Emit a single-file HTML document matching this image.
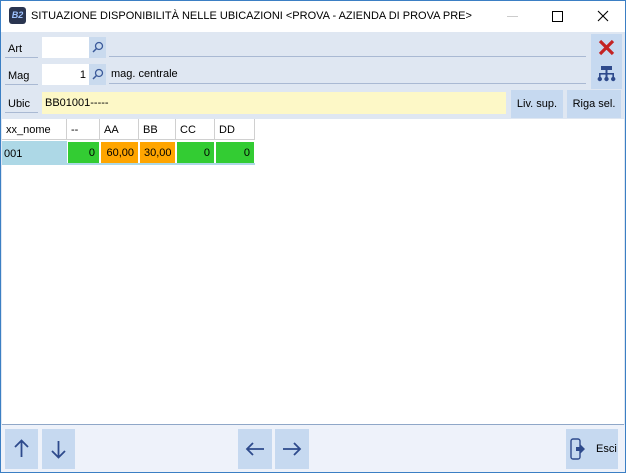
<!DOCTYPE html>
<html><head><style>
body{margin:0;width:626px;height:473px;overflow:hidden;font-family:"Liberation Sans",sans-serif;font-size:11px;color:#000;background:#fff}
.win{position:absolute;left:0;top:0;width:624px;height:471px;border:1px solid #3b7fc4;background:#dfe7f2}
.tb{position:absolute;left:0;top:0;width:624px;height:31px;background:#fff}
.a{position:absolute}
.lbl{position:absolute;left:4px;width:33px;height:21px;border-bottom:1px solid #a9b9d3;line-height:24px;padding-left:3px;box-sizing:border-box}
.inp{position:absolute;left:41px;width:47px;height:21px;background:#fff;text-align:right;line-height:22px;padding-right:3px;box-sizing:border-box}
.srch{position:absolute;left:88px;width:17px;height:21px;background:#c9daee}
.ln{position:absolute;left:108px;width:477px;height:21px;border-bottom:1px solid #a9b9d3;line-height:22px;padding-left:2px;box-sizing:border-box}
.btn{position:absolute;background:#c6d9f0;text-align:center}
.grid{position:absolute;left:1px;top:118px;width:622px;height:305px;background:#fff;border-bottom:1px solid #8fa7c8}
.c{position:absolute;height:21px;line-height:22px;box-sizing:border-box;padding:0 4px}
.h{top:0;border-right:1px solid #d0d0d0;border-bottom:1px solid #d0d0d0}
.d{top:23px;text-align:right;border-right:1px solid #fff}
</style></head><body>
<div class="win">
<div class="tb">
 <div class="a" style="left:8px;top:6px;width:17px;height:17px;background:#2a3550;border-radius:3px;color:#9fc3ff;font-size:9px;font-style:italic;line-height:17px;text-align:center;font-weight:bold">B2</div>
 <div class="a" style="left:30px;top:9px;font-size:11px">SITUAZIONE DISPONIBILITÀ NELLE UBICAZIONI &lt;PROVA - AZIENDA DI PROVA PRE&gt;</div>
 <div class="a" style="left:506px;top:15px;width:11px;height:1px;background:#ccc"></div>
 <div class="a" style="left:551px;top:10px;width:9px;height:9px;border:1px solid #000"></div>
 <svg class="a" style="left:596px;top:9px" width="12" height="12"><path d="M1 1L11 11M11 1L1 11" stroke="#000" stroke-width="1.1"/></svg>
</div>
<div class="lbl" style="top:36px">Art</div>
<div class="inp" style="top:36px"></div>
<div class="srch" style="top:36px"><svg width="17" height="21"><circle cx="10" cy="9" r="3.5" fill="none" stroke="#3b5a9a" stroke-width="1.3"/><path d="M7.5 11.5L4 15" stroke="#3b5a9a" stroke-width="1.5"/></svg></div>
<div class="ln" style="top:35px"></div>
<div class="lbl" style="top:63px">Mag</div>
<div class="inp" style="top:63px">1</div>
<div class="srch" style="top:63px"><svg width="17" height="21"><circle cx="10" cy="9" r="3.5" fill="none" stroke="#3b5a9a" stroke-width="1.3"/><path d="M7.5 11.5L4 15" stroke="#3b5a9a" stroke-width="1.5"/></svg></div>
<div class="ln" style="top:62px">mag. centrale</div>
<div class="lbl" style="top:91px">Ubic</div>
<div class="a" style="left:41px;top:91px;width:464px;height:22px;background:#fdf8c7;line-height:22px;padding-left:3px;box-sizing:border-box">BB01001-----</div>
<div class="btn" style="left:510px;top:89px;width:52px;height:28px;line-height:28px">Liv. sup.</div>
<div class="btn" style="left:566px;top:89px;width:54px;height:28px;line-height:28px">Riga sel.</div>
<div class="btn" style="left:590px;top:33px;width:31px;height:55px">
 <svg width="31" height="55"><path d="M9 7L22 20M22 7L9 20" stroke="#c42323" stroke-width="3.2"/>
 <g fill="#2e4a8c"><rect x="10" y="32" width="11" height="4"/><rect x="14.5" y="36" width="2" height="4"/><rect x="8" y="39" width="15" height="1.6"/><rect x="8" y="39" width="1.6" height="4"/><rect x="21.4" y="39" width="1.6" height="4"/><rect x="14.5" y="39" width="2" height="4"/><circle cx="8.8" cy="45" r="2.2"/><circle cx="15.5" cy="45" r="2.2"/><circle cx="22.2" cy="45" r="2.2"/></g></svg>
</div>
<div class="grid">
 <div class="c h" style="left:0;width:65px">xx_nome</div>
 <div class="c h" style="left:65px;width:33px">--</div>
 <div class="c h" style="left:98px;width:39px">AA</div>
 <div class="c h" style="left:137px;width:37px">BB</div>
 <div class="c h" style="left:174px;width:39px">CC</div>
 <div class="c h" style="left:213px;width:40px">DD</div>
 <div class="c" style="left:0;top:22px;width:65px;height:24px;background:#add8e6;line-height:26px;padding-left:2px">001</div>
 <div class="c d" style="left:66px;width:32px;background:#33cc33">0</div>
 <div class="c d" style="left:99px;width:38px;background:#ffa500">60,00</div>
 <div class="c d" style="left:138px;width:36px;background:#ffa500">30,00</div>
 <div class="c d" style="left:175px;width:38px;background:#33cc33">0</div>
 <div class="c d" style="left:214px;width:39px;background:#33cc33">0</div>
 <div class="a" style="left:0;top:44px;width:253px;height:2px;background:#add8e6"></div>
</div>
<div class="a" style="left:0;top:424px;width:624px;height:47px;background:#eef2fa"></div>
<div class="btn" style="left:4px;top:428px;width:33px;height:40px"><svg width="33" height="40"><path d="M16.5 12V28M10 18L16.5 11.5L23 18" fill="none" stroke="#2e4a8c" stroke-width="1.8"/></svg></div>
<div class="btn" style="left:41px;top:428px;width:33px;height:40px"><svg width="33" height="40"><path d="M16.5 12V28M10 22L16.5 28.5L23 22" fill="none" stroke="#2e4a8c" stroke-width="1.8"/></svg></div>
<div class="btn" style="left:237px;top:428px;width:34px;height:40px"><svg width="34" height="40"><path d="M9 20H26M15 14L9 20L15 26" fill="none" stroke="#2e4a8c" stroke-width="1.8"/></svg></div>
<div class="btn" style="left:274px;top:428px;width:34px;height:40px"><svg width="34" height="40"><path d="M8 20H25M19 14L25 20L19 26" fill="none" stroke="#2e4a8c" stroke-width="1.8"/></svg></div>
<div class="btn" style="left:565px;top:428px;width:52px;height:40px"><svg class="a" style="left:0;top:0" width="52" height="40"><rect x="5" y="10" width="9" height="20" rx="2" fill="none" stroke="#2e4a8c" stroke-width="1.4"/><path d="M10 18H14V15L19 20L14 25V22H10Z" fill="#2e4a8c"/></svg><span class="a" style="left:30px;top:14px">Esci</span></div>
</div>
</body></html>
